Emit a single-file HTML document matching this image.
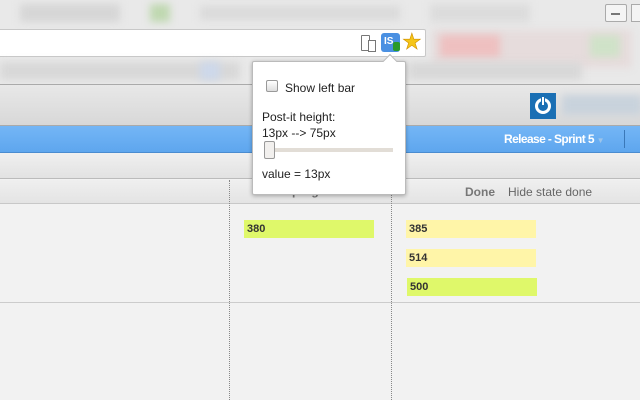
<!DOCTYPE html>
<html><head><style>
*{margin:0;padding:0;box-sizing:border-box}
body{width:640px;height:400px;overflow:hidden;position:relative;background:#f2f2f2;font-family:"Liberation Sans",sans-serif}
.a{position:absolute}
.blur{filter:blur(4px)}
.p{font:bold 11px 'Liberation Sans';color:#333;padding:3px 3px;height:18px;width:130px;position:absolute}
</style></head><body>
<div class="a" style="left:0;top:0;width:640px;height:84px;background:#e9e9e9"></div>
<div class="a blur" style="left:20px;top:4px;width:100px;height:18px;background:#d6d6d6"></div>
<div class="a blur" style="left:150px;top:4px;width:20px;height:18px;background:#bfd8b0"></div>
<div class="a blur" style="left:200px;top:6px;width:200px;height:14px;background:#dadada"></div>
<div class="a blur" style="left:430px;top:4px;width:100px;height:18px;background:#dcdcdc"></div>
<div class="a" style="left:605px;top:4px;width:22px;height:18px;border:1px solid #aaa;border-radius:2px;background:#f4f4f4"></div>
<div class="a" style="left:611px;top:13px;width:9px;height:2px;background:#777"></div>
<div class="a" style="left:631px;top:4px;width:12px;height:18px;border:1px solid #aaa;background:#f4f4f4"></div>
<div class="a" style="left:-2px;top:29px;width:428px;height:28px;background:#fff;border:1px solid #c8c8c8;border-radius:2px"></div>
<div class="a blur" style="left:432px;top:30px;width:200px;height:38px;background:#e6dcdc"></div>
<div class="a blur" style="left:440px;top:35px;width:60px;height:22px;background:#eec0c0"></div>
<div class="a blur" style="left:590px;top:35px;width:30px;height:22px;background:#cfe2c8"></div>
<div class="a" style="left:361px;top:35px;width:9px;height:16px;border:1.5px solid #777;border-radius:1px"></div>
<div class="a" style="left:368px;top:40px;width:8px;height:12px;border:1.5px solid #777;background:#fff"></div>
<div class="a" style="left:381px;top:33px;width:19px;height:19px;background:#4a90e2;border-radius:3px;color:#fff;font-size:10px;font-weight:bold;line-height:17px;padding-left:3px">IS</div>
<div class="a" style="left:393px;top:42px;width:7px;height:9px;background:#2a9a2a;border-radius:2px"></div>
<div class="a" style="left:402px;top:29px;font-size:22px;color:#f5c518;-webkit-text-stroke:0.6px #d09000">★</div>
<div class="a blur" style="left:0;top:62px;width:240px;height:18px;background:#d8d8d8"></div>
<div class="a blur" style="left:408px;top:62px;width:174px;height:18px;background:#d8d8d8"></div>
<div class="a blur" style="left:200px;top:62px;width:20px;height:18px;background:#cdd8ea"></div>
<div class="a" style="left:0;top:84px;width:640px;height:42px;background:linear-gradient(#e8e8e8,#d8d8d8);border-top:1px solid #aaa;border-bottom:1px solid #aaa"></div>
<div class="a" style="left:530px;top:93px;width:26px;height:26px;background:#1a6fb4"></div>
<div class="a" style="left:535px;top:98px;width:16px;height:16px;border:3px solid #fff;border-radius:50%"></div>
<div class="a" style="left:541px;top:96px;width:4px;height:10px;background:#fff;border:1px solid #1a6fb4"></div>
<div class="a blur" style="left:562px;top:95px;width:80px;height:20px;background:#c8d2dc"></div>
<div class="a" style="left:0;top:126px;width:640px;height:27px;background:linear-gradient(#74b6f6,#5ea6ee);border-bottom:1px solid #4a8cd0"></div>
<div class="a" style="left:504px;top:132px;color:#fff;font-weight:bold;font-size:12px;letter-spacing:-0.6px">Release - Sprint 5 <span style="color:#9cc4ea;font-size:8px">▼</span></div>
<div class="a" style="left:624px;top:130px;width:1px;height:18px;background:#3a78b8"></div>
<div class="a" style="left:0;top:153px;width:640px;height:26px;background:linear-gradient(#f0f0f0,#e2e2e2);border-bottom:1px solid #bbb"></div>
<div class="a" style="left:0;top:180px;width:640px;height:24px;background:linear-gradient(#efefef,#e4e4e4);border-bottom:1px solid #c8c8c8"></div>
<div class="a" style="left:465px;top:185px;font-size:12px;font-weight:bold;color:#777">Done</div>
<div class="a" style="left:508px;top:185px;font-size:12px;color:#666">Hide state done</div>
<div class="a" style="left:278px;top:184px;font-size:12px;font-weight:bold;color:#777">In progress</div>
<div class="a" style="left:229px;top:180px;height:220px;border-left:1px dotted #888"></div>
<div class="a" style="left:391px;top:180px;height:220px;border-left:1px dotted #888"></div>
<div class="a" style="left:0;top:302px;width:640px;height:1px;background:#ccc"></div>
<div class="p" style="left:244px;top:220px;background:#dff86a">380</div>
<div class="p" style="left:406px;top:220px;background:#fff5a8">385</div>
<div class="p" style="left:406px;top:249px;background:#fff5a8">514</div>
<div class="p" style="left:407px;top:278px;background:#dff86a">500</div>
<div class="a" style="left:252px;top:61px;width:154px;height:134px;background:#fff;border:1px solid #bbb;border-radius:2px;box-shadow:0 1px 4px rgba(0,0,0,.3)"></div>
<div class="a" style="left:385px;top:56px;width:10px;height:10px;background:#fff;border-left:1px solid #bbb;border-top:1px solid #bbb;transform:rotate(45deg)"></div>
<div class="a" style="left:266px;top:80px;width:12px;height:12px;border:1px solid #999;border-radius:2px;background:linear-gradient(#fff,#ddd)"></div>
<div class="a" style="left:285px;top:81px;font-size:12px;color:#222">Show left bar</div>
<div class="a" style="left:262px;top:109px;font-size:12px;color:#222;line-height:16px">Post-it height:<br>13px --&gt; 75px</div>
<div class="a" style="left:265px;top:148px;width:128px;height:4px;background:#e2ddd6"></div>
<div class="a" style="left:264px;top:141px;width:11px;height:18px;background:#f2f0ee;border:1px solid #999;border-radius:2px"></div>
<div class="a" style="left:262px;top:167px;font-size:12px;color:#222">value = 13px</div>
</body></html>
